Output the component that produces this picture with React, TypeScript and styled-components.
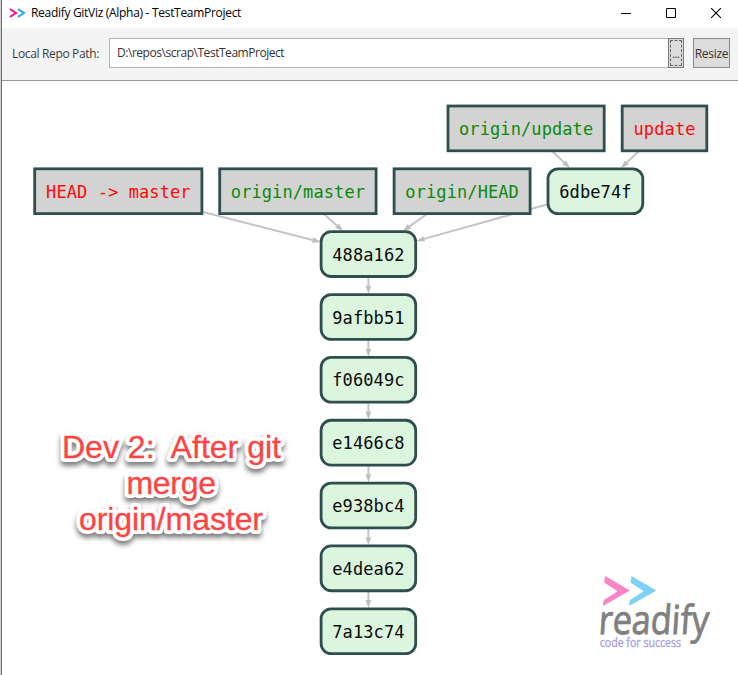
import React from "react";
import styled, { createGlobalStyle } from "styled-components";

const GlobalStyle = createGlobalStyle`
  html, body { margin: 0; padding: 0; background: #fff; overflow: hidden; }
  * { box-sizing: border-box; }
`;

const uiFont = `"Open Sans", "Noto Sans", sans-serif`;

const Window = styled.div`
  width: 738px;
  height: 675px;
  display: flex;
  flex-direction: column;
  background: #fff;
  border-left: 1px solid #d2d2d2;
  font-family: ${uiFont};
`;

const Frame = styled.div`
  flex: 1;
  min-height: 0;
  display: flex;
  flex-direction: column;
  border-left: 1px solid #6c6c6c;
`;

const TitleBar = styled.header`
  height: 28px;
  flex: none;
  display: flex;
  align-items: center;
  justify-content: space-between;
  padding: 0 17px 2px 7px;
`;

const TitleGroup = styled.div`
  display: flex;
  align-items: center;
  gap: 5px;
`;

const Title = styled.span`
  font-size: 12px;
  line-height: 16px;
  letter-spacing: -0.3px;
  color: #000;
  white-space: pre;
`;

const WindowButtons = styled.div`
  display: flex;
  align-items: center;
  gap: 35px;
`;

const Toolbar = styled.div`
  height: 53px;
  flex: none;
  display: flex;
  align-items: center;
  padding: 0 8px 2px 10px;
  background: #f4f4f4;
  border-bottom: 1px solid #969696;
`;

const Label = styled.label`
  width: 97px;
  flex: none;
  padding-top: 1px;
  font-size: 12px;
  letter-spacing: -0.35px;
  color: #3c3c3c;
  white-space: nowrap;
`;

const PathField = styled.div`
  flex: 1;
  height: 30px;
  display: flex;
  align-items: center;
  padding: 0 0 2px 7px;
  font-size: 12px;
  letter-spacing: -0.46px;
  color: #333;
  background: #fff;
  border: 1px solid #b4b6bb;
  border-right: 0;
`;

const BrowseButton = styled.button`
  width: 16px;
  height: 30px;
  padding: 1px;
  display: flex;
  background: #dcdcdc;
  border: 1px solid #7b7b7b;
`;

const FocusRing = styled.span`
  flex: 1;
  height: 26px;
  display: flex;
  align-items: center;
  justify-content: center;
  padding-top: 2px;
  border: 1px dashed #666;
  font: 10px/16px ${uiFont};
  letter-spacing: -0.2px;
  color: #222;
`;

const ResizeButton = styled.button`
  width: 37px;
  height: 30px;
  margin-left: 9px;
  padding: 1px 0 0;
  font: 12px ${uiFont};
  letter-spacing: -0.3px;
  color: #333;
  background: #dcdcdc;
  border: 1px solid #8a8a8a;
`;

const Canvas = styled.main`
  flex: 1;
  min-height: 0;
`;

const Drawing = styled.svg`
  display: block;
`;

const NodeBox = styled.rect<{ $commit: boolean }>`
  fill: ${(p) => (p.$commit ? "#dbf5de" : "#d3d3d3")};
  stroke: #2f4f4f;
  stroke-width: 2.8px;
`;

const NodeText = styled.text<{ $color: string }>`
  font-family: "DejaVu Sans Mono", monospace;
  font-size: 17px;
  fill: ${(p) => p.$color};
  white-space: pre;
`;

const EdgeLine = styled.line`
  stroke: #c4c4c4;
  stroke-width: 2px;
`;

const CaptionText = styled.text`
  font-family: "Liberation Sans", Arial, sans-serif;
  font-size: 32px;
  fill: #ff4343;
  stroke: #ff4343;
  stroke-width: 0.3px;
  white-space: pre;
`;

const CaptionHalo = styled.g`
  filter: drop-shadow(0.5px 4px 2.5px rgba(0, 0, 0, 0.5));

  text {
    fill: #fff;
    stroke: #fff;
    stroke-width: 8px;
    stroke-linejoin: round;
  }
`;

const LogoName = styled.text`
  font-family: "Open Sans", "Noto Sans", sans-serif;
  font-size: 40px;
  fill: #808080;
  stroke: #808080;
  stroke-width: 0.9px;
`;

const LogoTagline = styled.text`
  font-family: "Open Sans", "Noto Sans", sans-serif;
  font-size: 12px;
  fill: #aaa2dc;
  stroke: #aaa2dc;
  stroke-width: 0.35px;
`;

type Kind = "commit" | "local" | "remote";
interface GraphNode {
  label: string;
  kind: Kind;
  x: number;
  y: number;
  w: number;
}

const textColor: Record<Kind, string> = {
  commit: "#0a0a0a",
  local: "#ff0808",
  remote: "#0a8a0a",
};

const chain = ["488a162", "9afbb51", "f06049c", "e1466c8", "e938bc4", "e4dea62", "7a13c74"];
const PITCH = 62.85;

const nodes: GraphNode[] = [
  { label: "origin/update", kind: "remote", x: 446.6, y: 104.6, w: 159 },
  { label: "update", kind: "local", x: 620.8, y: 104.6, w: 87.4 },
  { label: "HEAD -> master", kind: "local", x: 33.3, y: 167.4, w: 170 },
  { label: "origin/master", kind: "remote", x: 218.3, y: 167.4, w: 159.2 },
  { label: "origin/HEAD", kind: "remote", x: 392.7, y: 167.4, w: 138.8 },
  { label: "6dbe74f", kind: "commit", x: 546.6, y: 167.4, w: 97.6 },
  ...chain.map((label, i): GraphNode => ({
    label,
    kind: "commit",
    x: 319.7,
    y: 230.3 + i * PITCH,
    w: 97.4,
  })),
];

const edges: number[][] = [
  [203, 212, 320.5, 242],
  [324, 214, 343, 231],
  [427, 214, 403, 231],
  [547, 204.5, 416.5, 241],
  [552, 151, 570, 168],
  [639, 151, 621, 168],
  ...chain.slice(1).map((_, i) => [368.4, 277 + i * PITCH, 368.4, 293.8 + i * PITCH]),
];

function Edge({ points }: { points: number[] }) {
  const [x1, y1, x2, y2] = points;
  const len = Math.hypot(x2 - x1, y2 - y1);
  const ux = (x2 - x1) / len;
  const uy = (y2 - y1) / len;
  const bx = x2 - ux * 8;
  const by = y2 - uy * 8;
  return (
    <g>
      <EdgeLine x1={x1} y1={y1} x2={bx} y2={by} />
      <polygon
        fill="#bdbdbd"
        points={`${x2},${y2} ${bx - uy * 2.8},${by + ux * 2.8} ${bx + uy * 2.8},${by - ux * 2.8}`}
      />
    </g>
  );
}

function Node({ node }: { node: GraphNode }) {
  const commit = node.kind === "commit";
  const textWidth = node.label.length * 10.32;
  return (
    <g>
      <NodeBox
        $commit={commit}
        x={node.x + 1.4}
        y={node.y + 1.4}
        width={node.w - 2.8}
        height={44.8}
        rx={commit ? 10 : 0}
      />
      <NodeText
        $color={textColor[node.kind]}
        x={node.x + (node.w - textWidth) / 2}
        y={node.y + 30.4}
        textLength={textWidth}
      >
        {node.label}
      </NodeText>
    </g>
  );
}

function CaptionLines() {
  return (
    <>
      <CaptionText x={62} y={457.5} textLength={219}>{"Dev 2:\u00a0 After git"}</CaptionText>
      <CaptionText x={126.5} y={494} textLength={89.5}>merge</CaptionText>
      <CaptionText x={79} y={530} textLength={184}>origin/master</CaptionText>
    </>
  );
}

function Logo() {
  return (
    <g>
      <polygon fill="#f984c8" points="605,576 630,590.5 603,606 603.6,600.2 617.5,591.2 604.2,582.6" />
      <polygon fill="#7fd0f5" points="631.4,576 656.4,590.5 629.2,606 629.8,600.2 643.7,591.2 630.6,582.6" />
      <g transform="translate(598 633.8) skewX(-4)">
        <LogoName x={0} y={0} textLength={110} lengthAdjust="spacingAndGlyphs">readify</LogoName>
      </g>
      <LogoTagline x={599.7} y={646.5} textLength={81.5} lengthAdjust="spacingAndGlyphs">code for success</LogoTagline>
    </g>
  );
}

export default function App() {
  return (
    <>
      <GlobalStyle />
      <Window>
        <Frame>
          <TitleBar>
            <TitleGroup>
              <Drawing width="17" height="12" viewBox="0 0 17 12" fill="none" strokeWidth="2">
                <path d="M1 2.2L7 6L1 9.8" stroke="#ec1594" />
                <path d="M9 2.2L15 6L9 9.8" stroke="#28a9e0" />
              </Drawing>
              <Title>Readify GitViz (Alpha) - TestTeamProject</Title>
            </TitleGroup>
            <WindowButtons>
              <Drawing width="10" height="10" viewBox="0 0 10 10"><path d="M0 5.5H10" stroke="#000" /></Drawing>
              <Drawing width="10" height="10" viewBox="0 0 10 10"><path d="M.5 .5H9.5V9.5H.5Z" fill="none" stroke="#000" /></Drawing>
              <Drawing width="10" height="10" viewBox="0 0 10 10"><path d="M0 0L10 10M10 0L0 10" stroke="#000" strokeWidth="1.1" /></Drawing>
            </WindowButtons>
          </TitleBar>
          <Toolbar>
            <Label>Local Repo Path:</Label>
            <PathField>D:\repos\scrap\TestTeamProject</PathField>
            <BrowseButton><FocusRing>...</FocusRing></BrowseButton>
            <ResizeButton>Resize</ResizeButton>
          </Toolbar>
          <Canvas>
            <Drawing width="736" height="594" viewBox="2 81 736 594">
              {edges.map((points, i) => <Edge key={i} points={points} />)}
              {nodes.map((node) => <Node key={node.label} node={node} />)}
              <CaptionHalo aria-hidden="true"><CaptionLines /></CaptionHalo>
              <CaptionLines />
              <Logo />
            </Drawing>
          </Canvas>
        </Frame>
      </Window>
    </>
  );
}
